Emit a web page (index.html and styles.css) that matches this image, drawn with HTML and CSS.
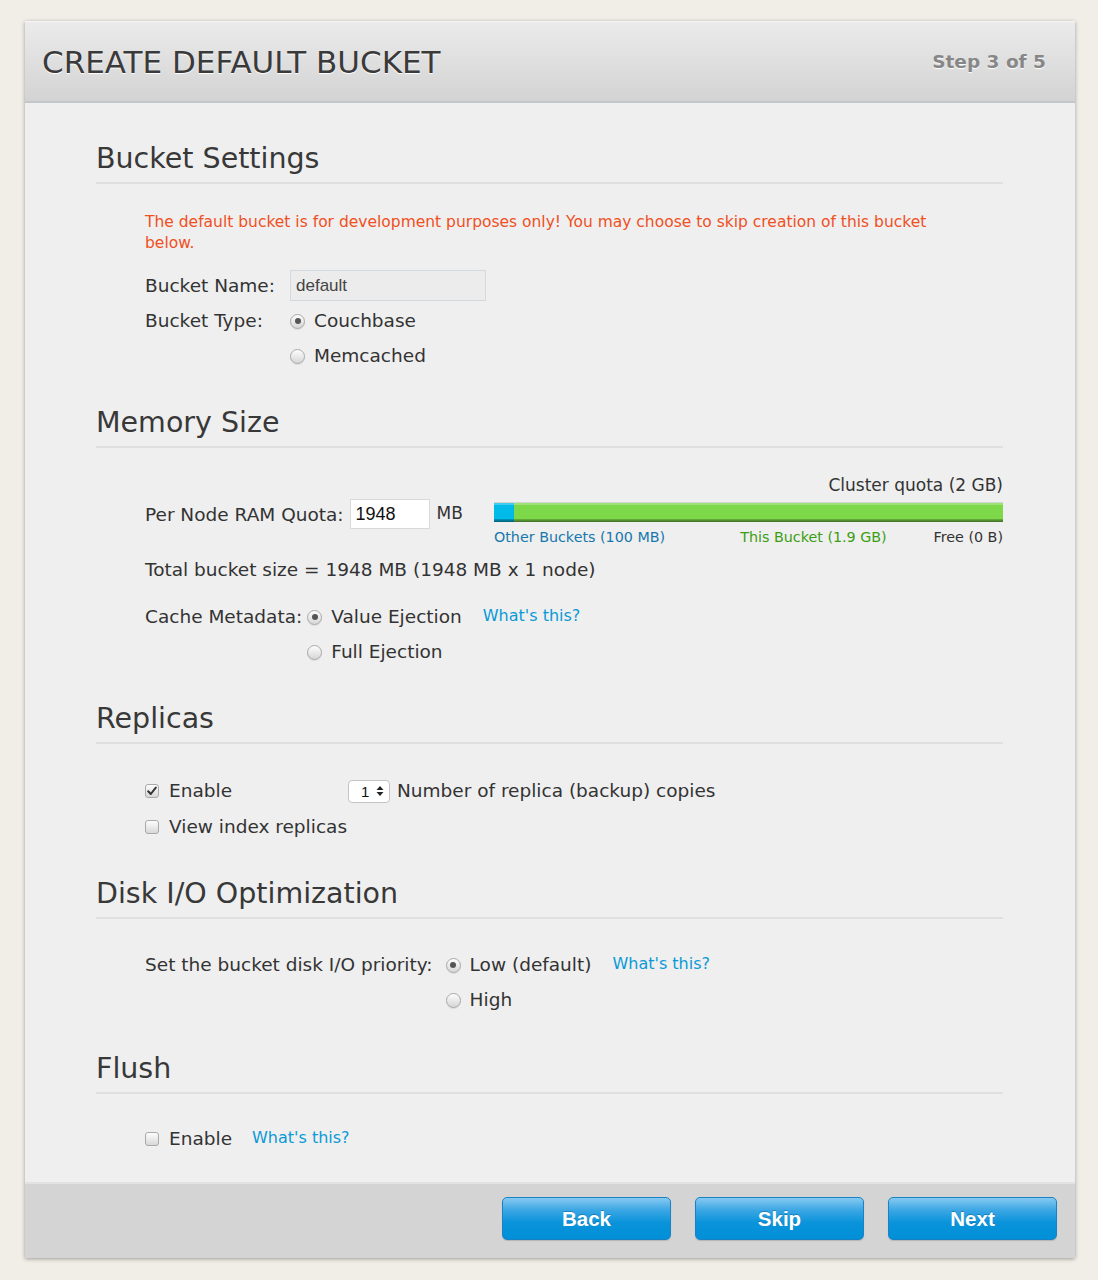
FILE: index.html
```html
<!DOCTYPE html>
<html>
<head>
<meta charset="utf-8">
<title>Create Default Bucket</title>
<link rel="stylesheet" href="styles.css">
</head>
<body>
<div class="wizard">
  <div class="wiz-header">
    <h1 class="wiz-title">CREATE DEFAULT BUCKET</h1>
    <span class="wiz-step">Step 3 of 5</span>
  </div>
  <div class="wiz-body">
    <section class="sec sec-first">
      <h2 class="sec-title">Bucket Settings</h2>
      <div class="sec-content">
        <p class="warning">The default bucket is for development purposes only! You may choose to skip creation of this bucket below.</p>
        <div class="row name-row">
          <span class="lbl lbl-fixed">Bucket Name:</span>
          <span class="text-input name-input">default</span>
        </div>
        <div class="row type-row">
          <span class="lbl lbl-fixed">Bucket Type:</span>
          <div class="options">
            <label class="opt"><span class="radio checked"></span>Couchbase</label>
            <label class="opt"><span class="radio"></span>Memcached</label>
          </div>
        </div>
      </div>
    </section>

    <section class="sec">
      <h2 class="sec-title">Memory Size</h2>
      <div class="sec-content">
        <div class="quota-title">Cluster quota (2 GB)</div>
        <div class="mem-row">
          <div class="mem-left">
            <span class="lbl">Per Node RAM Quota:</span>
            <span class="num-input">1948</span>
            <span class="unit">MB</span>
          </div>
          <div class="mem-bar-col">
            <div class="bar">
              <div class="bar-other"></div>
              <div class="bar-this"></div>
            </div>
            <div class="legend">
              <span class="lg-other">Other Buckets (100 MB)</span>
              <span class="lg-this">This Bucket (1.9 GB)</span>
              <span class="lg-free">Free (0 B)</span>
            </div>
          </div>
        </div>
        <div class="total">Total bucket size = 1948 MB (1948 MB x 1 node)</div>
        <div class="row cache-row">
          <span class="lbl">Cache Metadata:</span>
          <div class="options">
            <div class="opt-line">
              <label class="opt"><span class="radio checked"></span>Value Ejection</label>
              <a class="whats cache-whats">What's this?</a>
            </div>
            <label class="opt"><span class="radio"></span>Full Ejection</label>
          </div>
        </div>
      </div>
    </section>

    <section class="sec">
      <h2 class="sec-title">Replicas</h2>
      <div class="sec-content replicas">
        <div class="rep-line">
          <label class="opt rep-enable"><span class="check checked"><svg viewBox="0 0 14 14" width="14" height="14"><path d="M3.2 7.2 L5.8 10 L10.8 3.6" fill="none" stroke="#333" stroke-width="2" stroke-linecap="round" stroke-linejoin="round"/></svg></span>Enable</label>
          <span class="select">1<svg class="sel-arrows" viewBox="0 0 8 12" width="8" height="12"><path d="M4 1 L7.5 5 L0.5 5 Z M4 11 L7.5 7 L0.5 7 Z" fill="#222"/></svg></span>
          <span class="rep-text">Number of replica (backup) copies</span>
        </div>
        <label class="opt rep-view"><span class="check"></span>View index replicas</label>
      </div>
    </section>

    <section class="sec">
      <h2 class="sec-title">Disk I/O Optimization</h2>
      <div class="sec-content disk">
        <div class="row disk-row">
          <span class="lbl">Set the bucket disk I/O priority:</span>
          <div class="options">
            <div class="opt-line">
              <label class="opt"><span class="radio checked"></span>Low (default)</label>
              <a class="whats disk-whats">What's this?</a>
            </div>
            <label class="opt"><span class="radio"></span>High</label>
          </div>
        </div>
      </div>
    </section>

    <section class="sec sec-flush">
      <h2 class="sec-title">Flush</h2>
      <div class="sec-content flush">
        <div class="opt-line">
          <label class="opt"><span class="check"></span>Enable</label>
          <a class="whats flush-whats">What's this?</a>
        </div>
      </div>
    </section>
  </div>
  <div class="wiz-footer">
    <button class="btn">Back</button>
    <button class="btn">Skip</button>
    <button class="btn">Next</button>
  </div>
</div>
</body>
</html>
```
FILE: styles.css
```css
html, body {
  margin: 0;
  padding: 0;
}
body {
  background: #f1eee8;
  font-family: "DejaVu Sans", Verdana, sans-serif;
  color: #333;
  padding: 21px 0 22px 25px;
}
.wizard {
  width: 1050px;
  background: #efefef;
  box-shadow: 0 1px 4px rgba(0,0,0,0.35);
}
.wiz-header {
  border-bottom: 2px solid #c3c7ca;
  background: linear-gradient(#ebebeb, #d3d3d3);
  display: flex;
  align-items: center;
  justify-content: space-between;
  padding: 0 29px 0 17px;
  border-top: 1px solid #f6f6f6;
  box-sizing: border-box;
  height: 82px;
}
.wiz-title {
  margin: 0;
  font-weight: normal;
  font-size: 31px;
  line-height: 36px;
  color: #3a3a3a;
  text-shadow: 0 1px 1px #fff;
}
.wiz-step {
  font-weight: bold;
  font-size: 18.5px;
  color: #878787;
  text-shadow: 0 1px 1px #fff;
}
.wiz-body {
  padding: 39px 72px 31px 71px;
}
.sec {
  margin-top: 38px;
}
.sec-first {
  margin-top: 0;
}
.sec-flush {
  margin-top: 40px;
}
.sec-title {
  margin: 0;
  font-weight: normal;
  font-size: 28.5px;
  line-height: 34px;
  color: #383838;
  padding-bottom: 6px;
  border-bottom: 2px solid #e0e0e0;
}
.sec-content {
  padding-left: 49px;
  font-size: 18.5px;
}
.warning {
  margin: 28px 0 0 0;
  max-width: 810px;
  color: #f0501e;
  font-size: 15.5px;
  line-height: 21px;
}
.row {
  display: flex;
  align-items: flex-start;
  gap: 8px;
}
.lbl {
  line-height: 24px;
  white-space: nowrap;
}
.lbl-fixed {
  width: 145px;
  flex: none;
}
.row.name-row {
  margin-top: 16px;
  align-items: center;
  gap: 0;
}
.text-input {
  display: inline-flex;
  align-items: center;
  box-sizing: border-box;
  height: 31px;
  width: 196px;
  border: 1px solid #d3d9dd;
  background: #ececec;
  padding-left: 5px;
  font-family: "Liberation Sans", Arial, sans-serif;
  font-size: 17px;
  color: #444;
}
.type-row {
  margin-top: 8px;
  gap: 0;
}
.options {
  display: flex;
  flex-direction: column;
  gap: 11px;
}
.opt {
  display: flex;
  align-items: center;
  line-height: 24px;
  white-space: nowrap;
}
.radio {
  width: 15px;
  height: 15px;
  box-sizing: border-box;
  border-radius: 50%;
  border: 1px solid #a9a9a9;
  background: linear-gradient(#fdfdfd, #d6d6d6);
  margin-right: 9px;
  flex: none;
  position: relative;
  box-shadow: 0 1px 1px rgba(0,0,0,0.08);
}
.radio.checked::after {
  content: "";
  position: absolute;
  left: 3.5px;
  top: 3.5px;
  width: 6px;
  height: 6px;
  border-radius: 50%;
  background: #555;
}
.check {
  width: 14px;
  height: 14px;
  box-sizing: border-box;
  border: 1px solid #a9a9a9;
  border-radius: 3px;
  background: linear-gradient(#fdfdfd, #d8d8d8);
  margin-right: 10px;
  flex: none;
  display: flex;
  align-items: center;
  justify-content: center;
}
.check svg {
  display: block;
  flex: none;
}
.opt-line {
  display: flex;
  align-items: center;
}
.whats {
  color: #0a9ad6;
  font-size: 16px;
  line-height: 24px;
  text-decoration: none;
  cursor: pointer;
  margin-top: -2px;
}
.cache-whats { margin-left: 21px; }
.disk-whats { margin-left: 21px; }
.flush-whats { margin-left: 20px; }

/* memory */
.quota-title {
  margin-top: 27px;
  text-align: right;
  font-size: 17px;
  line-height: 20px;
}
.mem-row {
  margin-top: 4px;
  display: flex;
  align-items: flex-start;
  justify-content: space-between;
}
.mem-left {
  display: flex;
  align-items: center;
  height: 30px;
}
.mem-left .lbl {
  margin-right: 6px;
  line-height: 30px;
  padding-top: 2px;
}
.num-input {
  display: inline-flex;
  align-items: center;
  box-sizing: border-box;
  width: 80px;
  height: 30px;
  background: #fff;
  border: 1px solid #d6dadd;
  padding-left: 5px;
  font-family: "Liberation Sans", Arial, sans-serif;
  font-size: 18px;
  color: #111;
}
.unit {
  margin-left: 7px;
  font-size: 17px;
  margin-top: -3px;
}
.mem-bar-col {
  width: 509px;
  padding-top: 3px;
}
.bar {
  display: flex;
  height: 20px;
  box-sizing: border-box;
  border-top: 1px solid #d2d6d2;
  background: #7ed94a;
  position: relative;
  overflow: hidden;
}
.bar::after {
  content: "";
  position: absolute;
  left: 0;
  right: 0;
  bottom: 0;
  height: 3px;
  background: linear-gradient(rgba(0,0,0,0.18), rgba(0,0,0,0.5));
}
.bar::before {
  content: "";
  position: absolute;
  left: 0;
  right: 0;
  top: 0;
  height: 2px;
  background: rgba(255,255,255,0.25);
}
.bar-other {
  width: 20px;
  background: #00bbe9;
}
.bar-this {
  flex: 1;
  background: #7ed94a;
}
.legend {
  margin-top: 6px;
  display: flex;
  font-size: 14.3px;
  line-height: 18px;
}
.lg-other { color: #1877ad; }
.lg-this { color: #3a9e12; margin-left: 75px; }
.lg-free { color: #333; margin-left: auto; }
.total {
  margin-top: 12px;
  line-height: 24px;
}
.cache-row {
  margin-top: 23px;
  gap: 5px;
}
.disk-row {
  gap: 13px;
}

/* replicas */
.replicas {
  padding-top: 35px;
}
.rep-line {
  display: flex;
  align-items: center;
}
.rep-enable {
  width: 203px;
  flex: none;
}
.select {
  display: inline-flex;
  align-items: center;
  justify-content: space-between;
  box-sizing: border-box;
  width: 42px;
  height: 23px;
  background: #fff;
  border: 1px solid #c4c4c4;
  border-radius: 4px;
  padding: 0 5px 0 12px;
  font-family: "Liberation Sans", Arial, sans-serif;
  font-size: 15px;
  color: #111;
}
.sel-arrows {
  display: block;
}
.rep-text {
  margin-left: 7px;
  line-height: 24px;
}
.rep-view {
  margin-top: 12px;
}

/* disk */
.disk {
  padding-top: 34px;
}
.flush {
  padding-top: 33px;
}

/* footer */
.wiz-footer {
  height: 76px;
  box-sizing: border-box;
  border-top: 2px solid #e2e2e2;
  background: #d4d4d4;
  display: flex;
  justify-content: flex-end;
  align-items: flex-start;
  gap: 24px;
  padding: 13px 18px 0 0;
}
.btn {
  width: 169px;
  height: 43px;
  border: 1px solid #1a82c4;
  border-radius: 5px;
  background: linear-gradient(#86c9f1 0%, #3aa6e4 30%, #0a93da 60%, #0090d8 100%);
  color: #fff;
  font-family: "Liberation Sans", Arial, sans-serif;
  font-weight: bold;
  font-size: 20.5px;
  text-shadow: 0 -1px 0 rgba(0,60,120,0.35);
  box-shadow: 0 1px 1px rgba(0,0,0,0.15);
  padding: 0;
  cursor: pointer;
}
```
